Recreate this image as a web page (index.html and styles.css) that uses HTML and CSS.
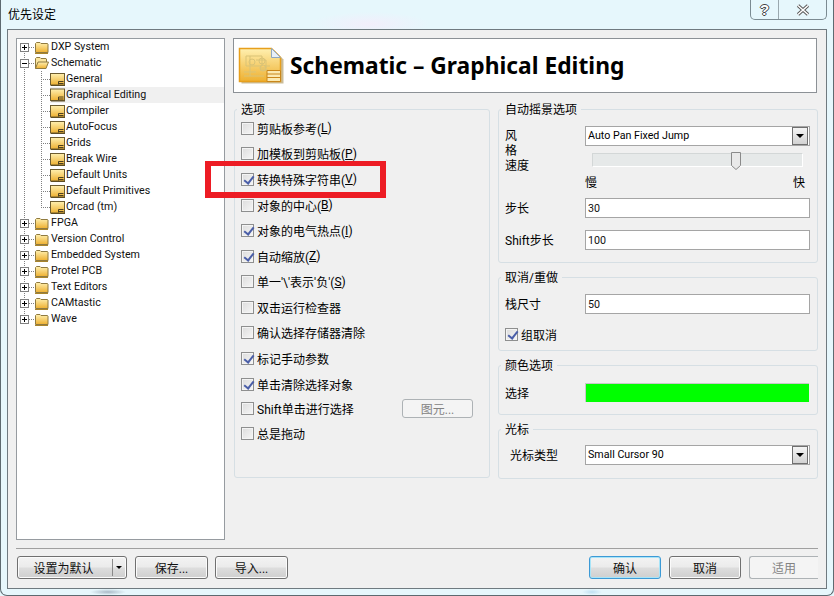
FILE: index.html
```html
<!DOCTYPE html>
<html lang="zh-CN">
<head>
    <meta charset="UTF-8">
    <title>优先设定</title>
    <link rel="stylesheet" href="styles.css">
</head>
<body>
    <svg class="defs" width="0" height="0">
        <defs>
            <linearGradient id="gold" x1="0" y1="0" x2="0" y2="1">
                <stop offset="0" stop-color="#fff0b0"/>
                <stop offset="1" stop-color="#eeb030"/>
            </linearGradient>
            <symbol id="folder" viewBox="0 0 15 14">
                <path d="M1.500 12.500V3.500l1-1h3.500l1 1h6.500l.5.500v8.500z" fill="url(#gold)" stroke="#8f7a40"/>
                <path d="M1 13.500h13" stroke="#a8842c"/>
            </symbol>
            <symbol id="folder-open" viewBox="0 0 15 14">
                <path d="M1.500 12.500V2.500l1-1h3.500l1 1h5l.5.500v3" fill="#fbe6a0" stroke="#8f7a40"/>
                <path d="M1.500 12.500l2.500-6.500h10.500l-2.500 6.500z" fill="url(#gold)" stroke="#8f7a40"/>
            </symbol>
            <symbol id="page" viewBox="0 0 15 13">
                <rect x=".5" y=".5" width="14" height="11.500" fill="url(#gold)" stroke="#6d5c30"/>
                <path d="M1 12.500h14" stroke="#5c4c24"/>
                <path d="M8.500 8.500h5M8.500 10.500h5M8.500 8.500v3" stroke="#4d4020" fill="none"/>
            </symbol>
        </defs>
    </svg>

    <header class="titlebar">
        <span class="title">优先设定</span>
        <div class="caption-btns">
            <span class="caption-btn help">?</span>
            <span class="caption-btn close">
                <svg width="14" height="12" viewBox="0 0 14 12">
                    <path d="M2 1.500l10 9M12 1.500l-10 9" stroke="#555" stroke-width="3.400" fill="none"/>
                    <path d="M2 1.500l10 9M12 1.500l-10 9" stroke="#fff" stroke-width="1.600" fill="none"/>
                </svg>
            </span>
        </div>
    </header>

    <div class="client">
        <div class="main">
            <nav class="tree">
                <div class="row first"><i class="exp plus"></i><svg class="ico"><use href="#folder"/></svg><span class="node">DXP System</span></div>
                <div class="row"><i class="exp"></i><svg class="ico"><use href="#folder-open"/></svg><span class="node">Schematic</span></div>
                <div class="row child"><svg class="ico"><use href="#page"/></svg><span class="node">General</span></div>
                <div class="row child selected"><svg class="ico"><use href="#page"/></svg><span class="node">Graphical Editing</span></div>
                <div class="row child"><svg class="ico"><use href="#page"/></svg><span class="node">Compiler</span></div>
                <div class="row child"><svg class="ico"><use href="#page"/></svg><span class="node">AutoFocus</span></div>
                <div class="row child"><svg class="ico"><use href="#page"/></svg><span class="node">Grids</span></div>
                <div class="row child"><svg class="ico"><use href="#page"/></svg><span class="node">Break Wire</span></div>
                <div class="row child"><svg class="ico"><use href="#page"/></svg><span class="node">Default Units</span></div>
                <div class="row child"><svg class="ico"><use href="#page"/></svg><span class="node">Default Primitives</span></div>
                <div class="row child last-child"><svg class="ico"><use href="#page"/></svg><span class="node">Orcad (tm)</span></div>
                <div class="row"><i class="exp plus"></i><svg class="ico"><use href="#folder"/></svg><span class="node">FPGA</span></div>
                <div class="row"><i class="exp plus"></i><svg class="ico"><use href="#folder"/></svg><span class="node">Version Control</span></div>
                <div class="row"><i class="exp plus"></i><svg class="ico"><use href="#folder"/></svg><span class="node">Embedded System</span></div>
                <div class="row"><i class="exp plus"></i><svg class="ico"><use href="#folder"/></svg><span class="node">Protel PCB</span></div>
                <div class="row"><i class="exp plus"></i><svg class="ico"><use href="#folder"/></svg><span class="node">Text Editors</span></div>
                <div class="row"><i class="exp plus"></i><svg class="ico"><use href="#folder"/></svg><span class="node">CAMtastic</span></div>
                <div class="row last"><i class="exp plus"></i><svg class="ico"><use href="#folder"/></svg><span class="node">Wave</span></div>
            </nav>

            <section class="content">
                <div class="banner">
                    <svg class="banner-icon" width="48" height="40" viewBox="0 0 48 40">
                        <path d="M2 3h33l9 9v24H2z" fill="#8a6a20" opacity=".45" transform="translate(1.500 1.500)"/>
                        <path d="M1.500 2.500h32l9 9v24h-41z" fill="url(#gold)" stroke="#e79f1c" stroke-width="1.500"/>
                        <path d="M33.500 2.500v9h9z" fill="#e8f0f8" stroke="#8fa8c0"/>
                        <g fill="none" stroke="#d9c377">
                            <path d="M8 10h16v10h-16zM12 10v20h14M18 14h10v8h-6M6 26h12M6 30h6M26 20h6M22 24h8"/>
                            <circle cx="14" cy="16" r="3"/>
                            <circle cx="24" cy="15" r="3"/>
                            <circle cx="25" cy="22" r="3"/>
                        </g>
                        <path d="M29 24.500h13.500v11H29zM29 28h13.500M29 31.500h13.500" fill="#fbe9b0" stroke="#c9861a"/>
                    </svg>
                    <h1>Schematic – Graphical Editing</h1>
                </div>

                <div class="columns">
                    <fieldset class="group options">
                        <legend>选项</legend>
                        <label class="opt"><input type="checkbox">剪贴板参考(<u>L</u>)</label>
                        <label class="opt"><input type="checkbox">加模板到剪贴板(<u>P</u>)</label>
                        <label class="opt"><input type="checkbox" checked>转换特殊字符串(<u>V</u>)</label>
                        <label class="opt"><input type="checkbox">对象的中心(<u>B</u>)</label>
                        <label class="opt"><input type="checkbox" checked>对象的电气热点(<u>I</u>)</label>
                        <label class="opt"><input type="checkbox" checked>自动缩放(<u>Z</u>)</label>
                        <label class="opt"><input type="checkbox">单一'\'表示'负'(<u>S</u>)</label>
                        <label class="opt"><input type="checkbox">双击运行检查器</label>
                        <label class="opt"><input type="checkbox">确认选择存储器清除</label>
                        <label class="opt"><input type="checkbox" checked>标记手动参数</label>
                        <label class="opt"><input type="checkbox" checked>单击清除选择对象</label>
                        <div class="opt with-btn">
                            <label class="opt-inline"><input type="checkbox">Shift单击进行选择</label>
                            <button class="btn small" disabled>图元...</button>
                        </div>
                        <label class="opt"><input type="checkbox">总是拖动</label>
                    </fieldset>

                    <div class="side">
                        <fieldset class="group pan">
                            <legend>自动摇景选项</legend>
                            <div class="field top">
                                <div class="lbl stack">风<br>格<br>速度</div>
                                <div class="ctl">
                                    <div class="combo"><span>Auto Pan Fixed Jump</span><i class="combo-btn"></i></div>
                                    <div class="slider">
                                        <svg class="thumb" width="12" height="20" viewBox="0 0 12 20">
                                            <path d="M1.500 1.500h9v13l-4.500 4-4.500-4z" fill="#e9e9e9" stroke="#8a8a8a"/>
                                        </svg>
                                    </div>
                                    <div class="scale"><span>慢</span><span>快</span></div>
                                </div>
                            </div>
                            <div class="field step"><span class="lbl">步长</span><input class="ctl text" value="30"></div>
                            <div class="field shift"><span class="lbl">Shift步长</span><input class="ctl text" value="100"></div>
                        </fieldset>

                        <fieldset class="group undo">
                            <legend>取消/重做</legend>
                            <div class="field"><span class="lbl">栈尺寸</span><input class="ctl text" value="50"></div>
                            <label class="opt undo-opt"><input type="checkbox" checked>组取消</label>
                        </fieldset>

                        <fieldset class="group color">
                            <legend>颜色选项</legend>
                            <div class="field"><span class="lbl">选择</span><div class="ctl swatch"></div></div>
                        </fieldset>

                        <fieldset class="group cursor">
                            <legend>光标</legend>
                            <div class="field">
                                <span class="lbl indent">光标类型</span>
                                <div class="ctl combo"><span>Small Cursor 90</span><i class="combo-btn"></i></div>
                            </div>
                        </fieldset>
                    </div>
                </div>
            </section>
        </div>

        <footer class="footer">
            <button class="btn split">设置为默认<i class="split-arrow"></i></button>
            <button class="btn save">保存...</button>
            <button class="btn import">导入...</button>
            <button class="btn ok primary">确认</button>
            <button class="btn cancel">取消</button>
            <button class="btn apply" disabled>适用</button>
        </footer>
    </div>

    <div class="highlight"></div>
</body>
</html>
```

FILE: styles.css
```css
* {
    box-sizing: border-box;
}
html, body {
    margin: 0;
    height: 100%;
}
body {
    position: relative;
    width: 834px;
    height: 596px;
    overflow: hidden;
    display: flex;
    flex-direction: column;
    font-family: "Roboto", "Noto Sans CJK SC", sans-serif;
    font-size: 10.7px;
    color: #000;
    border: 1px solid #5d6a70;
    border-top: none;
    border-radius: 0 0 7px 7px;
    background:
        radial-gradient(ellipse 18px 3px at 108px 592px, #a9b9c6, transparent),
        radial-gradient(ellipse 10px 3px at 592px 592px, #bfe0f2, transparent),
        radial-gradient(ellipse 60px 12px at 370px 24px, #f2eefb, transparent),
        #e6f7fc;
}
.defs {
    position: absolute;
}

/* title bar */
.titlebar {
    height: 29px;
    flex: none;
    display: flex;
    justify-content: space-between;
    padding-left: 7px;
}
.title {
    font-size: 12px;
    line-height: 30px;
    color: #000;
}
.caption-btns {
    display: flex;
    height: 20px;
    margin-right: 6px;
    border: 1px solid #7b8b92;
    border-top: none;
    border-radius: 0 0 5px 5px;
}
.caption-btn {
    display: flex;
    align-items: center;
    justify-content: center;
}
.help {
    width: 28px;
    border-right: 1px solid #9aa8ae;
    font: bold 15px "Liberation Sans", sans-serif;
    color: #fff;
    text-shadow: 1px 0 #444, -1px 0 #444, 0 1px #444, 0 -1px #444;
}
.close {
    width: 47px;
}

/* client area */
.client {
    flex: 1;
    margin: 0 6px 6px;
    padding: 8px 9px 0 8px;
    background: #f0f0f0;
    border: 1px solid #6f7a80;
}
.main {
    display: flex;
    gap: 8px;
    height: 502px;
}

/* tree */
.tree {
    width: 209px;
    flex: none;
    background: #fff;
    border: 1px solid #969ba0;
}
.row {
    height: 16px;
    display: flex;
    align-items: center;
    padding-left: 3px;
    background-image:
        repeating-linear-gradient(180deg, #808080 0 1px, transparent 1px 2px),
        repeating-linear-gradient(90deg, #808080 0 1px, transparent 1px 2px);
    background-repeat: no-repeat;
    background-size: 1px 100%, 6px 1px;
    background-position: 7px 0, 12px 8px;
}
.row.first {
    background-position: 7px 8px, 12px 8px;
}
.row.last {
    background-size: 1px 8px, 6px 1px;
}
.row.child {
    padding-left: 33px;
    background-image:
        repeating-linear-gradient(180deg, #808080 0 1px, transparent 1px 2px),
        repeating-linear-gradient(180deg, #808080 0 1px, transparent 1px 2px),
        repeating-linear-gradient(90deg, #808080 0 1px, transparent 1px 2px);
    background-size: 1px 100%, 1px 100%, 9px 1px;
    background-position: 7px 0, 24px 0, 24px 8px;
}
.row.last-child {
    background-size: 1px 100%, 1px 9px, 9px 1px;
}
.exp {
    width: 9px;
    height: 9px;
    margin-right: 5px;
    flex: none;
    border: 1px solid #808080;
    background:
        linear-gradient(#000, #000) center / 5px 1px no-repeat,
        #fff;
}
.exp.plus {
    background:
        linear-gradient(#000, #000) center / 5px 1px no-repeat,
        linear-gradient(#000, #000) center / 1px 5px no-repeat,
        #fff;
}
.ico {
    width: 15px;
    height: 14px;
    flex: none;
}
.node {
    flex: 1;
    padding-left: 2px;
    line-height: 16px;
    white-space: nowrap;
    color: #111;
}
.child .ico {
    height: 13px;
}
.child .node {
    padding-left: 1px;
}
.selected .ico,
.selected .node {
    background-color: #f0f0f0;
    height: 16px;
}

/* right side */
.content {
    flex: 1;
    min-width: 0;
}
.banner {
    height: 55px;
    display: flex;
    align-items: center;
    padding-left: 4px;
    background: #fff;
    border: 1px solid #8c9196;
}
.banner-icon {
    flex: none;
}
.banner h1 {
    margin: 0 0 0 4px;
    font: bold 22.800px "Noto Sans", sans-serif;
    color: #000;
    white-space: nowrap;
}
.columns {
    display: flex;
    margin: 8px -1px 0 1px;
    gap: 8px;
}
.group {
    margin: 0;
    min-width: 0;
    padding: 0 6px 0 6px;
    border: 1px solid #d6dfe4;
    border-radius: 3px;
}
.group legend {
    margin-left: -4px;
    padding: 0 4px 0 4px;
    height: 16px;
    font-size: 12px;
    line-height: 18px;
}
.options {
    width: 256px;
    height: 377px;
}
.opt {
    display: flex;
    align-items: center;
    height: 25.58px;
    white-space: nowrap;
    font-size: 12px;
}
.options .opt:first-of-type {
    margin-top: -1.500px;
}
.opt-inline {
    display: flex;
    align-items: center;
}
.opt input,
.opt-inline input {
    appearance: none;
    position: relative;
    width: 13px;
    height: 13px;
    margin: 0 3px 0 0;
    flex: none;
    border: 1px solid #8e8f8f;
    background: linear-gradient(135deg, #dcdcdc, #f6f6f6);
    box-shadow: inset 0 0 0 1px #f4f4f4;
}
.opt input:checked::after {
    content: "";
    position: absolute;
    left: 3.500px;
    top: 0;
    width: 4px;
    height: 8px;
    border: solid #4a5ea8;
    border-width: 0 2px 2px 0;
    transform: rotate(38deg);
}
.opt u {
    text-underline-offset: 1px;
}
.with-btn {
    justify-content: space-between;
    padding-right: 10px;
}
.side {
    width: 320px;
    display: flex;
    flex-direction: column;
    gap: 6px;
}
.pan {
    height: 162px;
}
.undo {
    height: 82px;
}
.color,
.cursor {
    height: 58px;
}
.field {
    display: flex;
    align-items: center;
}
.lbl {
    width: 80px;
    padding-bottom: 2px;
    flex: none;
    font-size: 12px;
    white-space: nowrap;
}
.lbl.indent {
    padding-left: 5px;
}
.color .lbl {
    padding-bottom: 0;
}
.ctl {
    width: 225px;
    flex: none;
}
.field.top {
    align-items: flex-start;
    padding-top: 9px;
}
.stack {
    padding-top: 3px;
    line-height: 15px;
}
.combo {
    display: flex;
    align-items: center;
    justify-content: space-between;
    height: 20px;
    padding: 0 1px 0 2px;
    background: #fff;
    border: 1px solid #a5a5a5;
}
.combo span {
    padding-bottom: 1px;
}
.combo-btn {
    position: relative;
    width: 16px;
    height: 18px;
    border: 1px solid #6f6f6f;
    background: linear-gradient(#f4f4f4, #d2d2d2);
}
.combo-btn::after {
    content: "";
    position: absolute;
    left: 3px;
    top: 6px;
    border: 4px solid transparent;
    border-top: 4px solid #000;
    border-bottom: none;
}
.slider {
    position: relative;
    width: 211px;
    height: 14px;
    margin: 7px 0 0 7px;
    background: #e6e9e9;
    border: 1px solid #d3d7d7;
    border-bottom-color: #fff;
    border-right-color: #fff;
}
.thumb {
    position: absolute;
    left: 137px;
    top: -3px;
}
.scale {
    display: flex;
    justify-content: space-between;
    width: 220px;
    margin-top: 9px;
    font-size: 12px;
    line-height: 14px;
}
.text {
    height: 20px;
    padding: 0 2px;
    font: inherit;
    color: #111;
    background: #fff;
    border: 1px solid #a5a5a5;
    border-radius: 0;
}
.field.step {
    margin-top: 8px;
}
.field.shift {
    margin-top: 12px;
}
.undo .field {
    margin-top: 9px;
}
.undo-opt {
    margin-top: 8px;
    height: 25px;
}
.color .field {
    margin-top: 10px;
}
.swatch {
    width: 224px;
    height: 19px;
    background: #00ff00;
    border: 1px solid #c8c8c8;
    border-width: 1px 0 0 1px;
}
.cursor .field {
    margin-top: 8px;
}

/* buttons */
.btn {
    height: 23px;
    padding: 0 0 1px;
    font-family: inherit;
    font-size: 12px;
    color: #111;
    border: 1px solid #707070;
    border-radius: 3px;
    background: linear-gradient(#f3f3f3 0, #ebebeb 48%, #dddddd 52%, #cfcfcf 100%);
    box-shadow: inset 0 0 0 1px #fbfbfb;
}
.btn:disabled {
    color: #838383;
    border-color: #adb2b5;
    background: #f4f4f4;
    box-shadow: none;
}
.btn.small {
    width: 71px;
    height: 19px;
}
.footer {
    display: flex;
    align-items: flex-start;
    height: 39px;
    margin: 8px -1px 0 0;
    padding: 7px 0 0 1px;
    border-top: 1px solid #a0a0a0;
}
.split {
    position: relative;
    width: 110px;
    padding-right: 17px;
    margin-right: 8px;
}
.split::after {
    content: "";
    position: absolute;
    right: 13px;
    top: 2px;
    bottom: 2px;
    border-left: 1px solid #8a8a8a;
}
.split-arrow {
    position: absolute;
    right: 4px;
    top: 9px;
    border: 3px solid transparent;
    border-top: 3px solid #000;
    border-bottom: none;
}
.save,
.import {
    width: 73px;
}
.save {
    margin-right: 7px;
}
.ok {
    width: 72px;
    margin-left: auto;
    margin-right: 8px;
}
.primary {
    border-color: #3c9ad6;
    box-shadow: inset 0 0 0 1px #a8e4f8;
}
.cancel {
    width: 72px;
    margin-right: 8px;
}
.apply {
    width: 69px;
    border-right: none;
    border-radius: 3px 0 0 3px;
}

/* annotation */
.highlight {
    position: absolute;
    left: 204px;
    top: 161px;
    width: 181px;
    height: 37px;
    border: 6px solid #ed1c24;
    border-top-width: 5px;
}
```
